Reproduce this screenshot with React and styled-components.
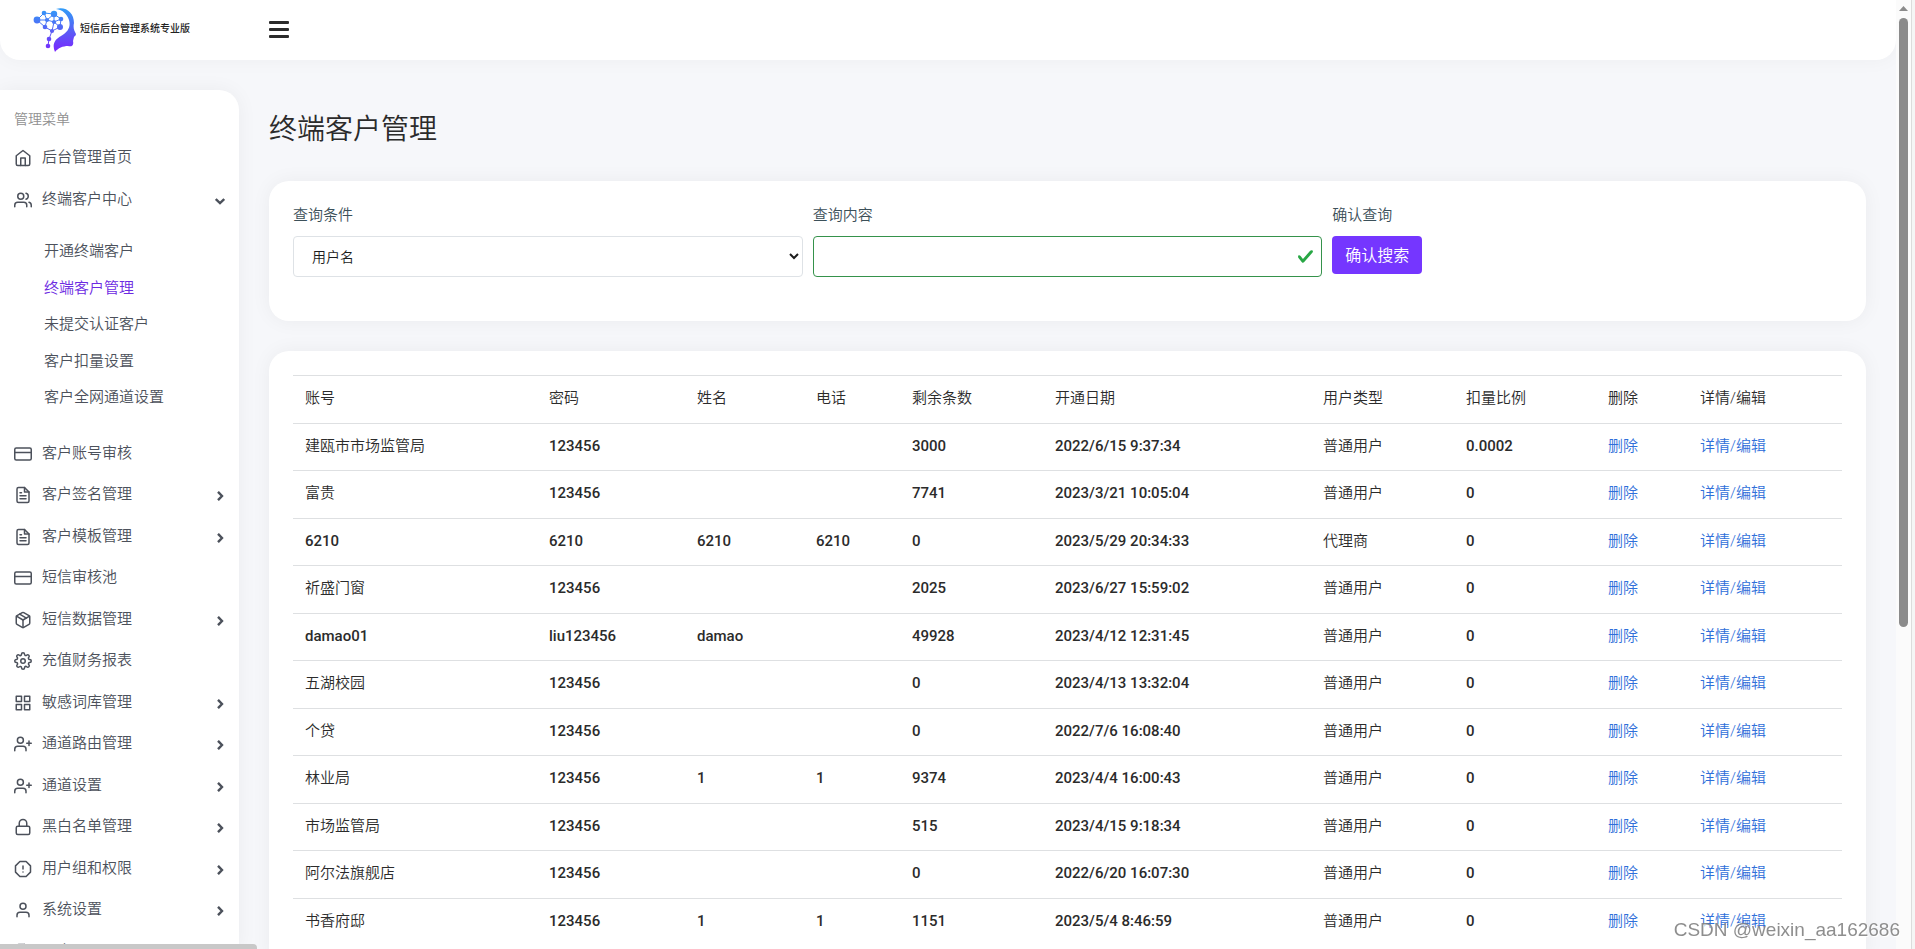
import React from 'react';
import styled, { createGlobalStyle, css } from 'styled-components';
import {
  FiHome, FiUsers, FiCreditCard, FiFileText, FiPackage, FiSettings, FiGrid,
  FiUserPlus, FiLock, FiAlertOctagon, FiUser,
} from 'react-icons/fi';

const GlobalStyle = createGlobalStyle`
  *, *::before, *::after { box-sizing: border-box; }
  body {
    margin: 0;
    background: #f6f7fa;
    color: #333;
    font-family: Roboto, "Noto Sans CJK SC", sans-serif;
    font-size: 15px;
    font-weight: 350;
    line-height: 1.5;
  }
  a { text-decoration: none; }
`;

const Window = styled.div`
  display: flex;
  height: 100vh;
  overflow: hidden;
`;

const Page = styled.div`
  flex: 1;
  min-width: 0;
  display: flex;
  flex-direction: column;
`;

const Header = styled.header`
  flex: none;
  display: flex;
  align-items: center;
  height: 60px;
  background: #fff;
  border-radius: 0 0 20px 20px;
  box-shadow: 0 0 20px rgba(0, 0, 0, 0.04);
`;

const Brand = styled.a`
  display: flex;
  align-items: center;
  gap: 2px;
  width: 269px;
  padding: 0 0 0 32px;
  color: #222;
  font-size: 10px;
  font-weight: 500;
`;

const BrandName = styled.span`
  padding-bottom: 4px;
`;

const MenuToggle = styled.button`
  display: flex;
  padding: 0;
  border: 0;
  background: none;
  color: #2b2b2b;
`;

const Body = styled.div`
  flex: 1;
  min-height: 0;
  display: flex;
`;

const Sidebar = styled.nav`
  flex: none;
  width: 239px;
  margin-top: 30px;
  padding: 19px 14px 0;
  overflow: hidden;
  background: #fff;
  border-top-right-radius: 20px;
  box-shadow: 0 0 20px rgba(0, 0, 0, 0.05);
`;

const MenuTitle = styled.div`
  margin-bottom: 8px;
  color: #909090;
  font-size: 14px;
`;

const MenuList = styled.ul`
  margin: 0;
  padding: 0;
  list-style: none;
`;

const MenuLink = styled.a`
  display: flex;
  align-items: center;
  gap: 10px;
  margin-bottom: 3px;
  padding: 8px 0;
  color: #4c515b;

  > svg { flex: none; margin-top: 2px; }
  > svg:last-child:not(:first-child) { margin: 4px 0 0 auto; }
`;

const SubList = styled(MenuList)`
  padding: 12px 0 18px 30px;
`;

const SubLink = styled.a`
  display: block;
  padding: 7px 0;
  color: ${(p) => (p.$active ? '#6d2ae2' : '#4c515b')};
`;

const Main = styled.main`
  flex: 1;
  min-width: 0;
  padding: 0 30px;
  overflow-y: auto;
  scrollbar-width: none;
`;

const Title = styled.h1`
  margin: 49px 0 30px;
  color: #2b2b2b;
  font-size: 28px;
  font-weight: 350;
  line-height: 42px;
`;

const Card = styled.section`
  margin-bottom: 30px;
  padding: 24px;
  background: #fff;
  border-radius: 20px;
  box-shadow: 0 0 20px rgba(0, 0, 0, 0.05);
`;

const SearchForm = styled.form`
  display: grid;
  grid-template-columns: repeat(3, 1fr);
  gap: 10px;
`;

const Field = styled.div`
  display: flex;
  flex-direction: column;
  align-items: flex-start;
  min-height: 92px;
`;

const Label = styled.label`
  margin-bottom: 11px;
  color: #3c5059;
  line-height: 20px;
`;

const control = css`
  width: 100%;
  height: 41px;
  border: 1px solid #dee2e6;
  border-radius: 4px;
  background: #fff;
  color: #1c1c1c;
  font: 350 14px Roboto, "Noto Sans CJK SC", sans-serif;
`;

const Select = styled.select`
  ${control}
  padding: 0 0 0 14px;
`;

const InputWrap = styled.div`
  position: relative;
  width: 100%;

  svg { position: absolute; right: 8px; top: 12px; }
`;

const Input = styled.input`
  ${control}
  display: block;
  padding: 0 36px 0 18px;
  border-color: #35924b;
`;

const SubmitButton = styled.button`
  height: 38px;
  padding: 0 13px 2px;
  border: 0;
  border-radius: 4px;
  background: #7536ff;
  color: #fff;
  font: 350 16px Roboto, "Noto Sans CJK SC", sans-serif;
`;

const Table = styled.table`
  width: 100%;
  table-layout: fixed;
  border-collapse: separate;
  border-spacing: 0;
`;

const cell = css`
  padding: 11px 12px 13px;
  border-top: 1px solid #dee0e2;
  color: #2b2b2b;
  text-align: left;
  white-space: nowrap;
`;

const Th = styled.th`
  ${cell}
  font-weight: 350;
`;

const Td = styled.td`
  ${cell}
  font-weight: ${(p) => (p.$latin ? 500 : 350)};
`;

const CellLink = styled.a`
  color: #2f6fda;
`;

const ScrollRail = styled.div`
  flex: none;
  display: flex;
  flex-direction: column;
  align-items: center;
  gap: 7px;
  width: 19px;
  padding: 6px 4px 0 0;
  background: linear-gradient(to left, #f5f5f5 3px, #dcdcdc 3px, #dcdcdc 4px, #fbfbfb 4px);
`;

const ScrollThumb = styled.div`
  width: 9px;
  height: calc(65% - 4px);
  border-radius: 5px;
  background: #8b8b8b;
`;

const BottomBar = styled.div`
  position: fixed;
  left: 0;
  bottom: 0;
  width: 257px;
  height: 5px;
  border-top-right-radius: 4px;
  background: #c8c8c8;
`;

const Watermark = styled.div`
  position: fixed;
  right: 15px;
  bottom: 6px;
  color: rgba(130, 130, 130, 0.9);
  font: 19px/26px "Liberation Sans", sans-serif;
  text-shadow: 1px 1px 0 #fff;
  pointer-events: none;
`;

const Logo = () => (
  <svg width="46" height="46" viewBox="0 0 46 46" aria-hidden="true">
    <defs>
      <linearGradient id="brand" gradientUnits="userSpaceOnUse" x1="0" y1="0" x2="0" y2="45">
        <stop offset="0" stopColor="#2ea0f8" />
        <stop offset="0.55" stopColor="#5a5cf5" />
        <stop offset="1" stopColor="#7b25ff" />
      </linearGradient>
    </defs>
    <path
      fill="url(#brand)"
      d="M24 2 C34 -1 42 6 42 16 C41 21 42 23 44 27 C44 29 42 29 42 30 L41 34 C42 38 40 40 36 39 C31 39 26 41 23 45 C20 38 22 33 29 29 C36 25 39 20 37 13 C35 7 31 3 24 2 Z"
    />
    <g stroke="url(#brand)" strokeWidth="1" fill="none">
      <path d="M5 13 L12 6 L22 7 L29 12 L28 20 L20 24 L13 20 L5 13 L15 13 L22 7 M12 6 L15 13 L13 20 M15 13 L22 15 L29 12 M22 7 L22 15 L28 20 M22 15 L20 24 L17 32 L16 39" />
    </g>
    <g fill="url(#brand)">
      <circle cx="5" cy="13" r="3.4" />
      <circle cx="12" cy="6" r="2.3" />
      <circle cx="22" cy="7" r="3.2" />
      <circle cx="29" cy="12" r="2.3" />
      <circle cx="15" cy="13" r="2.1" />
      <circle cx="22" cy="15" r="2.1" />
      <circle cx="28" cy="20" r="3" />
      <circle cx="13" cy="20" r="2.3" />
      <circle cx="20" cy="24" r="2.1" />
      <circle cx="17" cy="32" r="2.3" />
      <circle cx="16" cy="39" r="2.3" />
    </g>
  </svg>
);

const Bars = () => (
  <svg width="20" height="18" viewBox="0 0 20 18" fill="currentColor" aria-hidden="true">
    <rect y="0" width="20" height="3" rx="1" />
    <rect y="7" width="20" height="3" rx="1" />
    <rect y="14" width="20" height="3" rx="1" />
  </svg>
);

const Chevron = ({ open }) => (
  <svg width="10" height="10" viewBox="0 0 10 10" fill="none" stroke="currentColor" strokeWidth="2.4" aria-hidden="true">
    <path d={open ? 'M0.8 3 L5 7 L9.2 3' : 'M3 0.8 L7 5 L3 9.2'} />
  </svg>
);

const Check = () => (
  <svg width="17" height="17" viewBox="0 0 8 8" aria-hidden="true">
    <path
      fill="#28a745"
      d="M2.3 6.73L.6 4.53c-.4-1.04.46-1.4 1.1-.8l1.1 1.4 3.4-3.8c.6-.63 1.6-.27 1.2.7l-4 4.6c-.43.5-.8.4-1.1.1z"
    />
  </svg>
);

const menu = [
  { icon: FiHome, text: '后台管理首页' },
  {
    icon: FiUsers,
    text: '终端客户中心',
    children: ['开通终端客户', '终端客户管理', '未提交认证客户', '客户扣量设置', '客户全网通道设置'],
  },
  { icon: FiCreditCard, text: '客户账号审核' },
  { icon: FiFileText, text: '客户签名管理', more: true },
  { icon: FiFileText, text: '客户模板管理', more: true },
  { icon: FiCreditCard, text: '短信审核池' },
  { icon: FiPackage, text: '短信数据管理', more: true },
  { icon: FiSettings, text: '充值财务报表' },
  { icon: FiGrid, text: '敏感词库管理', more: true },
  { icon: FiUserPlus, text: '通道路由管理', more: true },
  { icon: FiUserPlus, text: '通道设置', more: true },
  { icon: FiLock, text: '黑白名单管理', more: true },
  { icon: FiAlertOctagon, text: '用户组和权限', more: true },
  { icon: FiUser, text: '系统设置', more: true },
  { icon: FiFileText, text: '退出' },
];

const columns = [
  ['账号', 244], ['密码', 148], ['姓名', 119], ['电话', 96], ['剩余条数', 143],
  ['开通日期', 268], ['用户类型', 143], ['扣量比例', 142], ['删除', 92], ['详情/编辑', 154],
];

const rows = [
  ['建瓯市市场监管局', '123456', '', '', '3000', '2022/6/15 9:37:34', '普通用户', '0.0002'],
  ['富贵', '123456', '', '', '7741', '2023/3/21 10:05:04', '普通用户', '0'],
  ['6210', '6210', '6210', '6210', '0', '2023/5/29 20:34:33', '代理商', '0'],
  ['祈盛门窗', '123456', '', '', '2025', '2023/6/27 15:59:02', '普通用户', '0'],
  ['damao01', 'liu123456', 'damao', '', '49928', '2023/4/12 12:31:45', '普通用户', '0'],
  ['五湖校园', '123456', '', '', '0', '2023/4/13 13:32:04', '普通用户', '0'],
  ['个贷', '123456', '', '', '0', '2022/7/6 16:08:40', '普通用户', '0'],
  ['林业局', '123456', '1', '1', '9374', '2023/4/4 16:00:43', '普通用户', '0'],
  ['市场监管局', '123456', '', '', '515', '2023/4/15 9:18:34', '普通用户', '0'],
  ['阿尔法旗舰店', '123456', '', '', '0', '2022/6/20 16:07:30', '普通用户', '0'],
  ['书香府邸', '123456', '1', '1', '1151', '2023/5/4 8:46:59', '普通用户', '0'],
];

const isLatin = (text) => /^[\x20-\x7e]+$/.test(text);

export default function App() {
  return (
    <Window>
      <GlobalStyle />
      <Page>
        <Header>
          <Brand href="#">
            <Logo />
            <BrandName>短信后台管理系统专业版</BrandName>
          </Brand>
          <MenuToggle type="button" aria-label="菜单"><Bars /></MenuToggle>
        </Header>
        <Body>
          <Sidebar>
            <MenuTitle>管理菜单</MenuTitle>
            <MenuList>
              {menu.map(({ icon: Icon, text, children, more }) => (
                <li key={text}>
                  <MenuLink href="#">
                    <Icon size={18} />
                    <span>{text}</span>
                    {(children || more) && <Chevron open={Boolean(children)} />}
                  </MenuLink>
                  {children && (
                    <SubList>
                      {children.map((item) => (
                        <li key={item}>
                          <SubLink href="#" $active={item === '终端客户管理'}>{item}</SubLink>
                        </li>
                      ))}
                    </SubList>
                  )}
                </li>
              ))}
            </MenuList>
          </Sidebar>
          <Main>
            <Title>终端客户管理</Title>
            <Card>
              <SearchForm>
                <Field>
                  <Label htmlFor="field">查询条件</Label>
                  <Select id="field" defaultValue="用户名">
                    <option>用户名</option>
                  </Select>
                </Field>
                <Field>
                  <Label htmlFor="query">查询内容</Label>
                  <InputWrap>
                    <Input id="query" type="text" />
                    <Check />
                  </InputWrap>
                </Field>
                <Field>
                  <Label htmlFor="submit">确认查询</Label>
                  <SubmitButton id="submit" type="button">确认搜索</SubmitButton>
                </Field>
              </SearchForm>
            </Card>
            <Card>
              <Table>
                <colgroup>
                  {columns.map(([name, width]) => <col key={name} width={width} />)}
                </colgroup>
                <thead>
                  <tr>{columns.map(([name]) => <Th key={name} scope="col">{name}</Th>)}</tr>
                </thead>
                <tbody>
                  {rows.map((row) => (
                    <tr key={row[0]}>
                      {row.map((text, i) => <Td key={i} $latin={isLatin(text)}>{text}</Td>)}
                      <Td><CellLink href="#">删除</CellLink></Td>
                      <Td><CellLink href="#">详情/编辑</CellLink></Td>
                    </tr>
                  ))}
                </tbody>
              </Table>
            </Card>
          </Main>
        </Body>
      </Page>
      <ScrollRail>
        <svg width="9" height="5" viewBox="0 0 9 5" aria-hidden="true"><path d="M0 5 L4.5 0 L9 5 Z" fill="#8b8b8b" /></svg>
        <ScrollThumb />
      </ScrollRail>
      <BottomBar />
      <Watermark>CSDN @weixin_aa162686</Watermark>
    </Window>
  );
}
